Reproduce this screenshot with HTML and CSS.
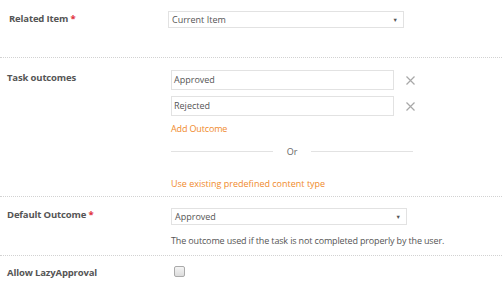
FILE: index.html
```html
<!DOCTYPE html>
<html>
<head>
<meta charset="utf-8">
<link rel="stylesheet" href="styles.css">
</head>
<body>
<div class="form">
  <div class="row row-related">
    <div class="label label-related">Related Item <span class="req">*</span></div>
    <div class="field">
      <div class="select select-related"><span>Current Item</span><span class="caret">&#9660;</span></div>
    </div>
  </div>
  <div class="row row-outcomes">
    <div class="label">Task outcomes</div>
    <div class="field">
      <div class="outcome"><div class="input">Approved</div><svg class="remove" width="9" height="9" viewBox="0 0 9 9"><path d="M0.5 0.5L8.5 8.5M8.5 0.5L0.5 8.5" stroke="#a8a8a8" stroke-width="1.2" fill="none"/></svg></div>
      <div class="outcome"><div class="input">Rejected</div><svg class="remove" width="9" height="9" viewBox="0 0 9 9"><path d="M0.5 0.5L8.5 8.5M8.5 0.5L0.5 8.5" stroke="#a8a8a8" stroke-width="1.2" fill="none"/></svg></div>
      <a class="link add">Add Outcome</a>
      <div class="or"><span class="line"></span><span class="or-text">Or</span><span class="line"></span></div>
      <a class="link existing">Use existing predefined content type</a>
    </div>
  </div>
  <div class="row row-default">
    <div class="label">Default Outcome <span class="req">*</span></div>
    <div class="field">
      <div class="select select-default"><span>Approved</span><span class="caret">&#9660;</span></div>
      <div class="help">The outcome used if the task is not completed properly by the user.</div>
    </div>
  </div>
  <div class="row row-lazy">
    <div class="label">Allow LazyApproval</div>
    <div class="field">
      <span class="checkbox"></span>
    </div>
  </div>
</div>
</body>
</html>
```
FILE: styles.css
```css
html, body {
  margin: 0;
  padding: 0;
  background: #fff;
}
body {
  font-family: "Open Sans", "Noto Sans", sans-serif;
  font-size: 9px;
  color: #555;
}
.row {
  display: flex;
  border-bottom: 1px dotted #d2d2d2;
}
.label {
  width: 164px;
  padding-left: 7px;
  font-weight: 700;
  color: #555;
  font-size: 9.5px;
  letter-spacing: -0.15px;
  flex-shrink: 0;
}
.label-related {
  padding-left: 9px;
  width: 159px;
}
.req {
  color: #e0303a;
}
.field {
  display: flex;
  flex-direction: column;
}
.row-related {
  height: 58px;
  padding-top: 11px;
  box-sizing: border-box;
}
.row-related .label { padding-top: 1px; }
.row-outcomes {
  height: 139px;
  padding-top: 12px;
  box-sizing: border-box;
}
.row-outcomes .label { padding-top: 1px; }
.row-default {
  height: 59px;
  padding-top: 11px;
  box-sizing: border-box;
}
.row-lazy {
  height: 30px;
  padding-top: 10px;
  box-sizing: border-box;
  border-bottom: none;
}
.select {
  display: flex;
  justify-content: space-between;
  align-items: center;
  height: 17px;
  box-sizing: border-box;
  border: 1px solid #e2e2e2;
  padding: 0 5px 0 3px;
  color: #555;
}
.select-related { width: 236px; }
.select-default { width: 236px; }
.caret {
  font-size: 5.5px;
  color: #555;
}
.outcome {
  display: flex;
  align-items: center;
  margin-bottom: 6px;
}
.input {
  width: 223px;
  height: 20px;
  box-sizing: border-box;
  border: 1px solid #e2e2e2;
  padding: 0 2px;
  line-height: 18px;
  color: #555;
}
.remove {
  margin-left: 12px;
}
.link {
  color: #f08a2c;
  display: block;
}
.add {
  letter-spacing: -0.15px;
}
.or {
  display: flex;
  align-items: center;
  width: 242px;
  margin-top: 10px;
}
.line {
  flex: 1;
  height: 1px;
  background: #e2e2e2;
}
.or-text {
  padding: 0 14px;
  color: #666;
}
.existing {
  margin-top: 19px;
}
.help {
  margin-top: 9px;
  color: #555;
  letter-spacing: -0.15px;
}
.checkbox {
  display: block;
  width: 9px;
  height: 9px;
  margin-left: 3px;
  border: 1px solid #aaa;
  border-radius: 2px;
  background: linear-gradient(#f4f4f4, #dcdcdc);
}
```
